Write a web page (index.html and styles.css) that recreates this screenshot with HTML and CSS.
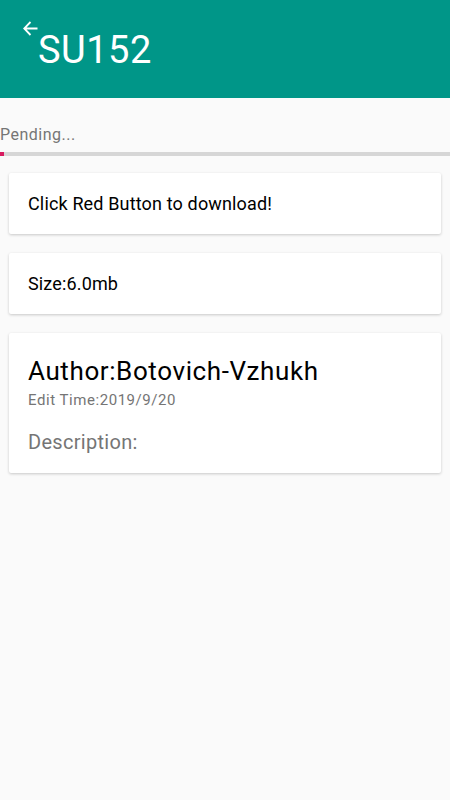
FILE: index.html
```html
<!DOCTYPE html>
<html>
<head>
<title>SU152</title>
<link rel="stylesheet" href="styles.css">
</head>
<body>
<div class="toolbar">
  <svg class="back" width="15" height="15" viewBox="0 0 15 15">
    <path d="M14.5 7.5H1.5M7.5 1L1.2 7.5L7.5 14" fill="none" stroke="#fff" stroke-width="1.8"/>
  </svg>
  <span class="title">SU152</span>
</div>
<div class="status">Pending...</div>
<div class="progress"><div class="progress-fill" style="width: 4px"></div></div>
<div class="card card-short">
  <span class="card-text">Click Red Button to download!</span>
</div>
<div class="card card-short">
  <span class="card-text">Size:6.0mb</span>
</div>
<div class="card card-info">
  <div class="author">Author:Botovich-Vzhukh</div>
  <div class="edit-time">Edit Time:2019/9/20</div>
  <div class="description">Description:</div>
</div>
</body>
</html>
```

FILE: styles.css
```css
body {
  margin: 0;
  background: #fafafa;
  font-family: Roboto, "Noto Sans", sans-serif;
}
.toolbar {
  height: 98px;
  background: #009688;
  display: flex;
  align-items: flex-start;
  padding-left: 23px;
}
.back {
  margin-top: 21px;
}
.title {
  color: #fff;
  font-size: 38px;
  line-height: 44px;
  letter-spacing: 0.5px;
  margin-top: 28px;
  margin-left: 0;
}
.status {
  margin-top: 27px;
  height: 20px;
  font-size: 16px;
  line-height: 20px;
  letter-spacing: 0.5px;
  color: #757575;
}
.progress {
  margin-top: 7px;
  height: 4px;
  background: #d6d6d6;
}
.progress-fill {
  height: 4px;
  background: #d81b60;
}
.card {
  margin: 17px 9px 19px 9px;
  background: #fff;
  border-radius: 2px;
  box-shadow: 0 1px 3px rgba(0, 0, 0, 0.2);
  padding-left: 19px;
}
.card + .card {
  margin-top: 0;
}
.card-short {
  height: 61px;
  display: flex;
  align-items: center;
}
.card-text {
  font-size: 18px;
  letter-spacing: 0.15px;
  color: #000;
}
.card-info {
  padding-top: 22px;
  padding-bottom: 19px;
}
.author {
  font-size: 26px;
  line-height: 32px;
  letter-spacing: 0.6px;
  color: #000;
}
.edit-time {
  margin-top: 4px;
  font-size: 15px;
  line-height: 18px;
  letter-spacing: 0.55px;
  color: #757575;
}
.description {
  margin-top: 21px;
  font-size: 20px;
  line-height: 24px;
  letter-spacing: 0.3px;
  color: #757575;
}
```
